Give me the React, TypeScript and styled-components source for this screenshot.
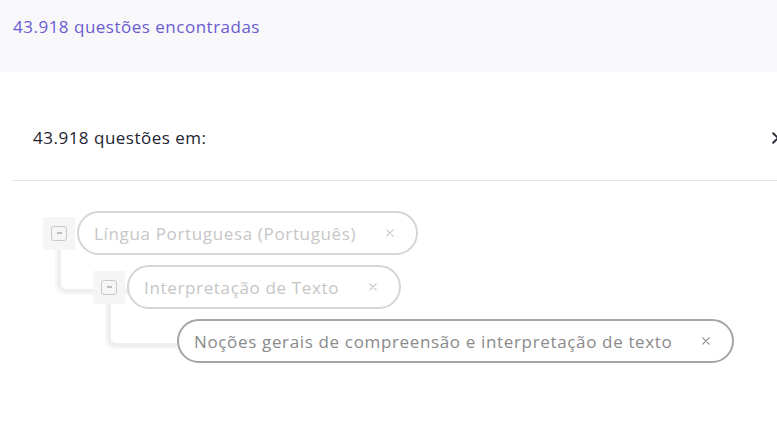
import React from "react";
import styled, { createGlobalStyle } from "styled-components";

const Global = createGlobalStyle`
  html, body { margin: 0; padding: 0; background: #ffffff; overflow: hidden; }
  body { font-family: "Open Sans", "Noto Sans", sans-serif; }
  * { box-sizing: border-box; }
`;

const Page = styled.div`
  width: 777px;
  height: 425px;
  display: flex;
  flex-direction: column;
  overflow: hidden;
`;

const TopBar = styled.div`
  height: 72px;
  background: #f8f8fa;
  padding: 17px 13px 0;
`;

const Found = styled.div`
  color: #6b5bd2;
  font-size: 17px;
  letter-spacing: 0.5px;
  line-height: 20px;
  font-weight: 500;
`;

const Panel = styled.div`
  margin-left: 13px;
  display: flex;
  flex-direction: column;
`;

const PanelHeader = styled.div`
  display: flex;
  align-items: center;
  justify-content: space-between;
  padding: 56px 0 32px 20px;
  border-bottom: 1px solid #e6e6e6;
  margin-right: -35px;
`;

const PanelTitle = styled.div`
  color: #232331;
  font-size: 17px;
  letter-spacing: 0.5px;
  line-height: 20px;
`;

const CloseButton = styled.button`
  border: 0;
  background: none;
  padding: 0;
  width: 40px;
  display: flex;
  justify-content: flex-start;
  color: #232331;
  cursor: pointer;
`;

const Tree = styled.div`
  display: flex;
  flex-direction: column;
  gap: 10px;
  padding: 30px 0 0 30px;
`;

const Row = styled.div<{ $level: number }>`
  position: relative;
  display: flex;
  align-items: center;
  gap: 2px;
  margin-left: ${(p) => p.$level * 50}px;
  ${(p) =>
    p.$level > 0
      ? `&::before {
    content: "";
    position: absolute;
    left: -36px;
    top: -16px;
    width: 70px;
    height: 40px;
    border-left: 4px solid #efefef;
    border-bottom: 4px solid #efefef;
    border-bottom-left-radius: 9px;
    box-shadow: -2px 2px 0 0 #f8f8f8;
    z-index: 0;
  }`
      : ""}
`;

const Toggle = styled.div`
  position: relative;
  z-index: 1;
  width: 32px;
  height: 33px;
  background: #f5f5f5;
  display: flex;
  align-items: center;
  justify-content: center;
`;

const Spacer = styled.div`
  width: 32px;
  height: 33px;
`;

const MinusBox = styled.span`
  width: 16px;
  height: 15px;
  border: 1.5px solid #c9c9c9;
  border-radius: 3px;
  display: flex;
  align-items: center;
  justify-content: center;
  &::after {
    content: "";
    width: 5px;
    height: 2px;
    background: #bdbdbd;
  }
`;

const Pill = styled.div<{ $active?: boolean }>`
  position: relative;
  z-index: 1;
  height: 44px;
  border: 2px solid ${(p) => (p.$active ? "#a4a4a4" : "#d5d5d5")};
  border-radius: 22px;
  background: #ffffff;
  display: flex;
  align-items: center;
  padding: 0 19px 0 15px;
  gap: 27px;
  color: ${(p) => (p.$active ? "#8a8a8a" : "#c6c6c6")};
  font-size: 17px;
  letter-spacing: 0.65px;
  white-space: nowrap;
`;

const Remove = styled.span`
  display: flex;
  width: 14px;
  justify-content: center;
`;

const XIcon = ({ size, width }: { size: number; width: number }) => (
  <svg width={size} height={size} viewBox="0 0 10 10">
    <path
      d="M1 1 L9 9 M9 1 L1 9"
      stroke="currentColor"
      strokeWidth={width}
      strokeLinecap="round"
      fill="none"
    />
  </svg>
);

type Node = { label: string; level: number; toggle: boolean; active?: boolean };

const nodes: Node[] = [
  { label: "Língua Portuguesa (Português)", level: 0, toggle: true },
  { label: "Interpretação de Texto", level: 1, toggle: true },
  {
    label: "Noções gerais de compreensão e interpretação de texto",
    level: 2,
    toggle: false,
    active: true,
  },
];

export default function App() {
  return (
    <Page>
      <Global />
      <TopBar>
        <Found>43.918 questões encontradas</Found>
      </TopBar>
      <Panel>
        <PanelHeader>
          <PanelTitle>43.918 questões em:</PanelTitle>
          <CloseButton aria-label="Fechar">
            <XIcon size={12} width={1.6} />
          </CloseButton>
        </PanelHeader>
        <Tree>
          {nodes.map((n) => (
            <Row key={n.label} $level={n.level}>
              {n.toggle ? (
                <Toggle>
                  <MinusBox />
                </Toggle>
              ) : (
                <Spacer />
              )}
              <Pill $active={n.active}>
                {n.label}
                <Remove>
                  <XIcon size={8} width={1.4} />
                </Remove>
              </Pill>
            </Row>
          ))}
        </Tree>
      </Panel>
    </Page>
  );
}
